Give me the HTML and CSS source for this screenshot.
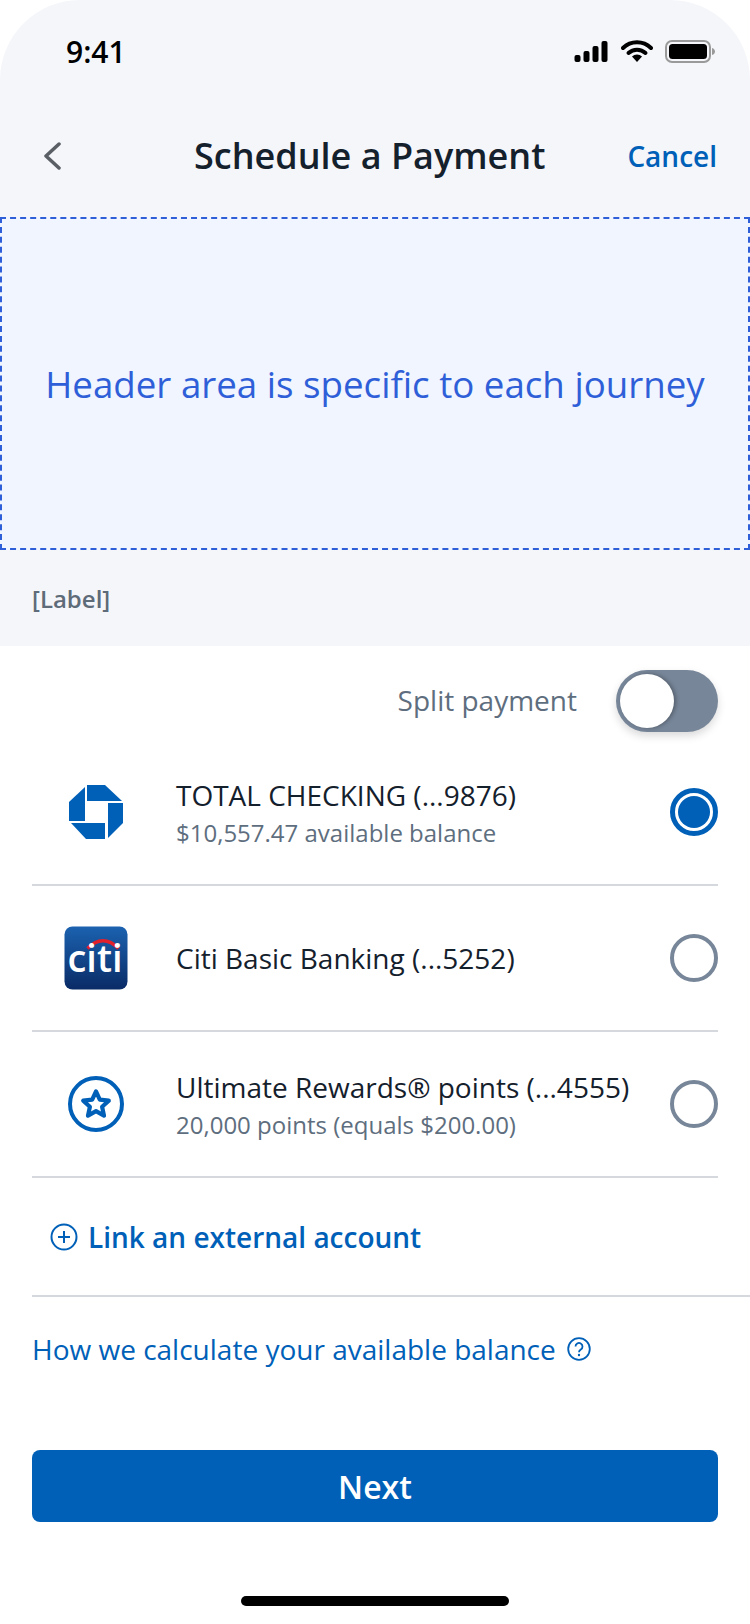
FILE: index.html
```html
<!DOCTYPE html>
<html lang="en">

<head>
    <meta charset="UTF-8">
    <meta name="viewport" content="width=device-width, initial-scale=1.0">
    <title>Schedule a Payment</title>
    <link rel="stylesheet" href="styles.css">
</head>

<body>
    <div class="top-area">
        <!-- Status bar -->
        <div class="status-bar">
            <span class="time">9:41</span>
            <div class="status-icons">
                <svg width="35" height="21" viewBox="0 0 34 21">
                    <rect x="0" y="14" width="6" height="7" rx="2" fill="#000" />
                    <rect x="9" y="10" width="6" height="11" rx="2" fill="#000" />
                    <rect x="18" y="5" width="6" height="16" rx="2" fill="#000" />
                    <rect x="27" y="0" width="6" height="21" rx="2" fill="#000" />
                </svg>
                <svg width="32" height="22" viewBox="0 0 32 22">
                    <path d="M2 8a20 20 0 0 1 28 0" fill="none" stroke="#000" stroke-width="4" stroke-linecap="round" />
                    <path d="M7.500 13a12.500 12.500 0 0 1 17 0" fill="none" stroke="#000" stroke-width="4" stroke-linecap="round" />
                    <path d="M11 16.500a7.500 7.500 0 0 1 10 0L16 22z" fill="#000" />
                </svg>
                <svg width="50" height="23" viewBox="0 0 50 23">
                    <rect x="1" y="1" width="44" height="21" rx="6" fill="none" stroke="#9a9a9a" stroke-width="2" />
                    <rect x="4" y="4" width="38" height="15" rx="3.500" fill="#000" />
                    <path d="M47 8c2 .5 3 2 3 3.500s-1 3-3 3.500z" fill="#9a9a9a" />
                </svg>
            </div>
        </div>

        <!-- Nav -->
        <div class="nav-bar">
            <svg class="back-icon" width="20" height="28" viewBox="0 0 20 28">
                <path d="M17 2L4 14l13 12" fill="none" stroke="#5a5f66" stroke-width="3.500" stroke-linecap="round" stroke-linejoin="round" />
            </svg>
            <h1 class="nav-title">Schedule a Payment</h1>
            <a class="cancel-link">Cancel</a>
        </div>

        <div class="journey-box">Header area is specific to each journey</div>
        <div class="label-row">[Label]</div>
    </div>

    <div class="split-row">
        <span class="split-text">Split payment</span>
        <div class="toggle"><div class="knob"></div></div>
    </div>

    <!-- Accounts -->
    <div class="accounts">
        <div class="account-row">
            <div class="account-icon">
                <svg width="54" height="54" viewBox="0 0 54 54">
                    <path d="M18 0H36L53 16H18z" fill="#0060b8" />
                    <path d="M39 18H54V38L39 53z" fill="#0060b8" />
                    <path d="M2 38H36V54H17z" fill="#0060b8" />
                    <path d="M16 2V36H0V17z" fill="#0060b8" />
                </svg>
            </div>
            <div class="account-text">
                <div class="account-name">TOTAL CHECKING (...9876)</div>
                <div class="account-sub">$10,557.47 available balance</div>
            </div>
            <div class="radio selected"><div class="radio-dot"></div></div>
        </div>

        <div class="account-row">
            <div class="account-icon">
                <svg width="64" height="64" viewBox="0 0 64 64">
                    <defs>
                        <linearGradient id="citiBg" x1="0" y1="0" x2="0" y2="1">
                            <stop offset="0" stop-color="#1b62b0" />
                            <stop offset="1" stop-color="#0a2b66" />
                        </linearGradient>
                    </defs>
                    <rect x="0.500" y="0.500" width="63" height="63" rx="8" fill="url(#citiBg)" />
                    <path d="M23.500 22.500c10-10.500 21-10.500 31 0" fill="none" stroke="#e2202c" stroke-width="3.500" />
                    <text class="citi-text" x="31" y="46" text-anchor="middle">citi</text>
                </svg>
            </div>
            <div class="account-text">
                <div class="account-name">Citi Basic Banking (...5252)</div>
            </div>
            <div class="radio"></div>
        </div>

        <div class="account-row">
            <div class="account-icon">
                <svg width="58" height="58" viewBox="0 0 58 58">
                    <circle cx="29" cy="29" r="26" fill="none" stroke="#0060b8" stroke-width="4" />
                    <path d="M29 16.500l3.800 8.200 9 1-6.700 6 1.900 8.900-8-4.500-8 4.500 1.900-8.900-6.700-6 9-1z" fill="none" stroke="#0060b8" stroke-width="4.200" stroke-linejoin="round" />
                </svg>
            </div>
            <div class="account-text">
                <div class="account-name">Ultimate Rewards® points (...4555)</div>
                <div class="account-sub">20,000 points (equals $200.00)</div>
            </div>
            <div class="radio"></div>
        </div>
    </div>

    <div class="link-row">
        <svg width="28" height="28" viewBox="0 0 28 28">
            <circle cx="14" cy="14" r="12.500" fill="none" stroke="#0060b8" stroke-width="2" />
            <path d="M14 8v12M8 14h12" fill="none" stroke="#0060b8" stroke-width="2" />
        </svg>
        <span class="link-text">Link an external account</span>
    </div>

    <div class="help-row">
        <span class="help-text">How we calculate your available balance</span>
        <svg width="24" height="24" viewBox="0 0 24 24">
            <circle cx="12" cy="12" r="10.800" fill="none" stroke="#0060b8" stroke-width="1.800" />
            <path d="M8.500 9.500a3.500 3.500 0 1 1 5.300 3c-1.200.8-1.800 1.300-1.800 2.700" fill="none" stroke="#0060b8" stroke-width="1.800" />
            <circle cx="12" cy="18" r="1.200" fill="#0060b8" />
        </svg>
    </div>

    <button class="next-button">Next</button>
    <div class="home-indicator"></div>
</body>

</html>
```

FILE: styles.css
```css
* {
    box-sizing: border-box;
}

body {
    margin: 0;
    width: 750px;
    height: 1624px;
    overflow: hidden;
    background-color: #fff;
    font-family: "Open Sans", sans-serif;
    color: #14202c;
}

.top-area {
    height: 646px;
    background-color: #f5f6fa;
    border-radius: 80px 80px 0 0;
}

.status-bar {
    display: flex;
    justify-content: space-between;
    align-items: center;
    height: 102px;
    padding: 0 35px 0 66px;
}

.time {
    font-size: 30px;
    font-weight: 600;
    color: #000;
}

.status-icons {
    display: flex;
    align-items: center;
    gap: 12px;
}

.nav-bar {
    display: flex;
    align-items: center;
    justify-content: space-between;
    height: 115px;
    padding: 0 33px 8px 42px;
}

.nav-title {
    margin: 0 0 0 132px;
    font-size: 36px;
    font-weight: 600;
    color: #14202c;
}

.cancel-link {
    margin-left: auto;
    font-size: 28px;
    font-weight: 600;
    color: #0060b8;
}

.journey-box {
    display: flex;
    align-items: center;
    justify-content: center;
    height: 333px;
    background-color: #f0f5ff;
    border: 2px dashed #2f5fd8;
    font-size: 36.700px;
    color: #2f5fd8;
}

.label-row {
    padding: 32px 32px 0;
    font-size: 24px;
    font-weight: 600;
    color: #5e6b78;
}

.split-row {
    display: flex;
    justify-content: flex-end;
    align-items: center;
    gap: 39px;
    padding: 24px 32px 0;
    height: 86px;
}

.split-text {
    font-size: 28px;
    line-height: 36px;
    margin-bottom: 2px;
    color: #5e6e7e;
}

.toggle {
    width: 102px;
    height: 62px;
    padding: 4px;
    background-color: #778699;
    border-radius: 31px;
    box-shadow: 0 4px 8px rgba(0, 0, 0, 0.15);
}

.knob {
    width: 54px;
    height: 54px;
    background-color: #fff;
    border-radius: 50%;
    box-shadow: 2px 0 4px rgba(0, 0, 0, 0.3);
}

.accounts {
    margin: 0 32px;
    padding-top: 8px;
}

.account-row {
    display: flex;
    align-items: center;
    height: 146px;
    border-bottom: 2px solid #d5d8dd;
}

.account-icon {
    display: flex;
    justify-content: center;
    width: 128px;
    margin-right: 16px;
}

.account-text {
    flex: 1;
}

.account-name {
    font-size: 28px;
    line-height: 38px;
}

.account-sub {
    margin-top: 3px;
    font-size: 24px;
    line-height: 32px;
    color: #5e6e7e;
}

.citi-text {
    font-family: "Open Sans", sans-serif;
    font-size: 38px;
    font-weight: 600;
    fill: #fff;
}

.radio {
    display: flex;
    align-items: center;
    justify-content: center;
    width: 48px;
    height: 48px;
    border: 4px solid #778699;
    border-radius: 50%;
}

.radio.selected {
    border: 5px solid #0060b8;
}

.radio-dot {
    width: 32px;
    height: 32px;
    background-color: #0060b8;
    border-radius: 50%;
}

.link-row {
    display: flex;
    align-items: center;
    gap: 10px;
    height: 119px;
    margin-left: 32px;
    padding-left: 18px;
    border-bottom: 2px solid #d5d8dd;
}

.link-text {
    font-size: 28px;
    font-weight: 600;
    color: #0060b8;
}

.help-row {
    display: flex;
    align-items: center;
    gap: 11px;
    height: 104px;
    padding-left: 32px;
}

.help-text {
    font-size: 28px;
    color: #0060b8;
}

.next-button {
    display: block;
    width: 686px;
    height: 72px;
    margin: 49px 32px 0;
    background-color: #0060b8;
    border: none;
    border-radius: 8px;
    color: #fff;
    font-family: "Open Sans", sans-serif;
    font-size: 32px;
    font-weight: 600;
}

.home-indicator {
    width: 268px;
    height: 10px;
    margin: 74px auto 0;
    background-color: #000;
    border-radius: 5px;
}
```
